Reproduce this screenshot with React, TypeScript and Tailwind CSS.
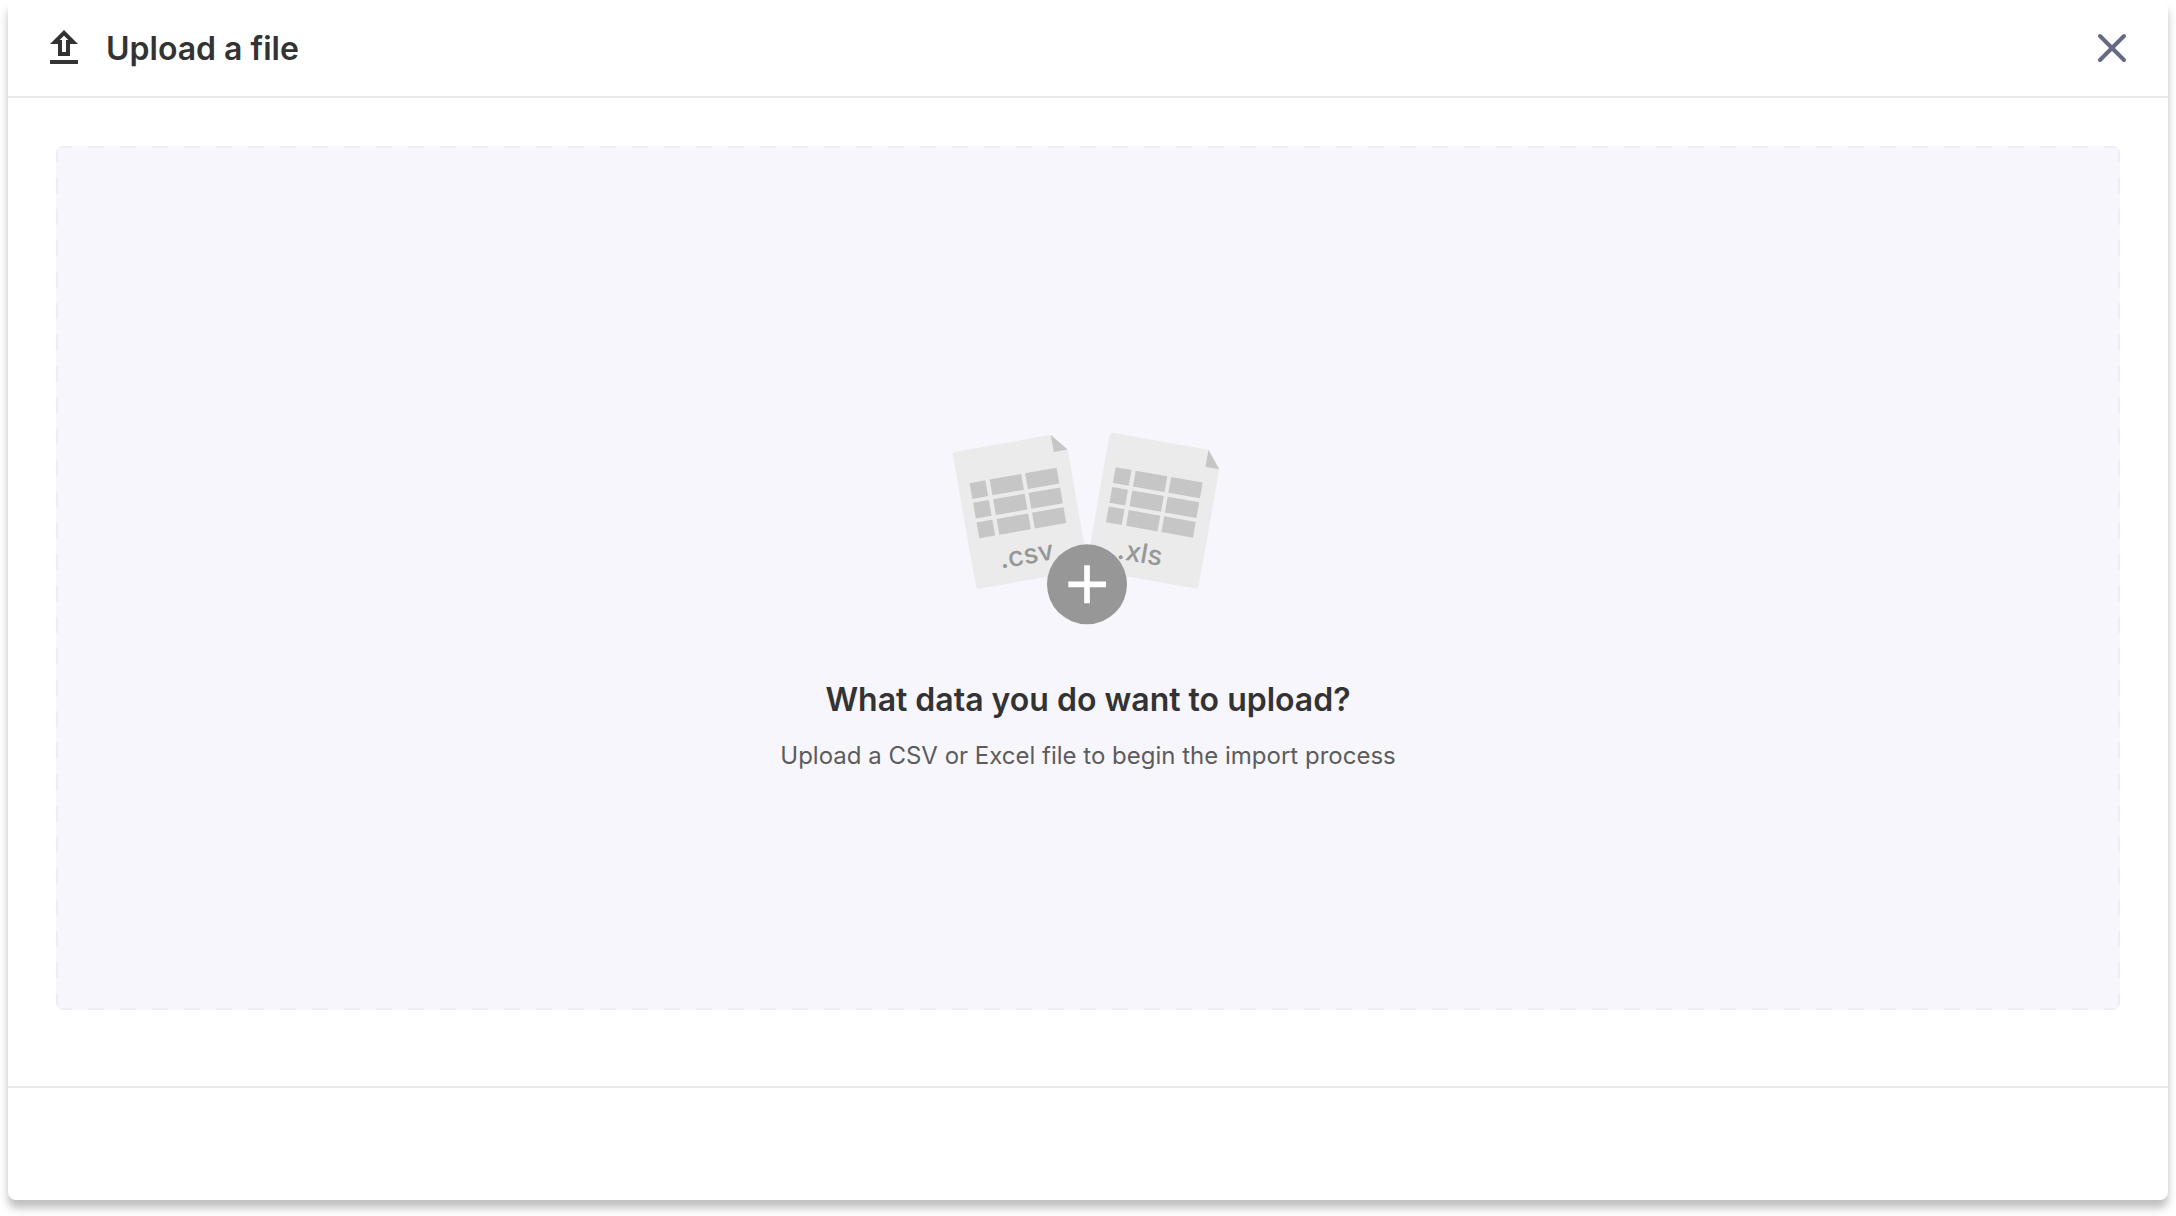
import React, { useState } from 'react';

const cellColumns = [
  { x: 35, width: 48 },
  { x: 96, width: 96 },
  { x: 204, width: 96 },
];

const cellRows = [100, 160, 220];

const UploadIcon = () => (
  <svg width="48" height="48" viewBox="0 0 24 24" fill="currentColor" aria-hidden="true">
    <path d="M5 20h14v-2H5v2zM9 16h6v-6h4l-7-7-7 7h4v6zm3-10.17L14.17 8H13v6h-2V8H9.83L12 5.83z" />
  </svg>
);

const FileSheet = ({ label, transform }: { label: string; transform: string }) => (
  <g transform={transform}>
    <path d="M10 0H300L342 52V407Q342 417 332 417H10Q0 417 0 407V10Q0 0 10 0Z" fill="#ebebeb" />
    <path d="M300 0L342 52H300Z" fill="#c6c6c6" />
    {cellRows.map((y) =>
      cellColumns.map((col) => (
        <rect key={`${col.x}-${y}`} x={col.x} y={y} width={col.width} height={48} fill="#c6c6c6" />
      ))
    )}
    <text x="84" y="369" fontSize="82" fontWeight="500" fill="#979797">
      {label}
    </text>
  </g>
);

const FilesIllustration = () => (
  <svg width="316" height="230" viewBox="0 0 948 690" aria-hidden="true">
    <FileSheet label=".csv" transform="translate(67 127) rotate(-10)" />
    <FileSheet label=".xls" transform="translate(540 67) rotate(10)" />
    <circle cx="471" cy="523" r="120" fill="#979797" />
    <path d="M415 523H528M471 466V580" stroke="#fff" strokeWidth="17" />
  </svg>
);

const DashedOutline = () => (
  <svg className="absolute inset-0 w-full h-full rounded-lg" stroke="#eeecf7" strokeWidth="4" aria-hidden="true">
    <line x1="0" y1="0" x2="100%" y2="0" strokeDasharray="16 16" />
    <line x1="0" y1="100%" x2="100%" y2="100%" strokeDasharray="16 16" />
    <line x1="0" y1="0" x2="0" y2="100%" strokeDasharray="16 15.4" />
    <line x1="100%" y1="0" x2="100%" y2="100%" strokeDasharray="16 15.4" />
  </svg>
);

const App = () => {
  const [open, setOpen] = useState(true);
  const [fileName, setFileName] = useState('');

  if (!open) return null;

  return (
    <div className="min-h-screen bg-white px-2 pb-4 flex flex-col font-['Inter',sans-serif] text-[#333333]">
      <div className="flex-1 flex flex-col bg-white rounded-lg shadow-[0_8px_8px_rgba(0,0,0,0.25)]">
        <header className="flex items-center justify-between h-[98px] px-8 border-b-2 border-[#e8e8e8]">
          <div className="flex items-center gap-[18px]">
            <UploadIcon />
            <h1 className="pt-0.5 text-[32px] leading-10 font-semibold">Upload a file</h1>
          </div>
          <button type="button" aria-label="Close" onClick={() => setOpen(false)} className="p-2">
            <svg width="32" height="32" viewBox="0 0 32 32" fill="none" stroke="#646b82" strokeWidth="4" strokeLinecap="round">
              <path d="M4 4L28 28M28 4L4 28" />
            </svg>
          </button>
        </header>

        <main className="flex-1 flex px-12 pt-12 pb-[76px]">
          <label className="relative flex-1 flex flex-col items-center justify-center pt-[26px] rounded-lg bg-[#f7f6fd] cursor-pointer">
            <DashedOutline />
            <input
              type="file"
              accept=".csv,.xls,.xlsx"
              className="sr-only"
              onChange={(e) => setFileName(e.target.files?.[0]?.name ?? '')}
            />
            <FilesIllustration />
            <span className="mt-10 text-[32px] leading-10 font-semibold">
              What data you do want to upload?
            </span>
            <span className="mt-5 text-2xl leading-8 text-[#5c5c5c]">
              {fileName || 'Upload a CSV or Excel file to begin the import process'}
            </span>
          </label>
        </main>

        <footer className="h-[114px] border-t-2 border-[#e8e8e8]" />
      </div>
    </div>
  );
};

export default App;
